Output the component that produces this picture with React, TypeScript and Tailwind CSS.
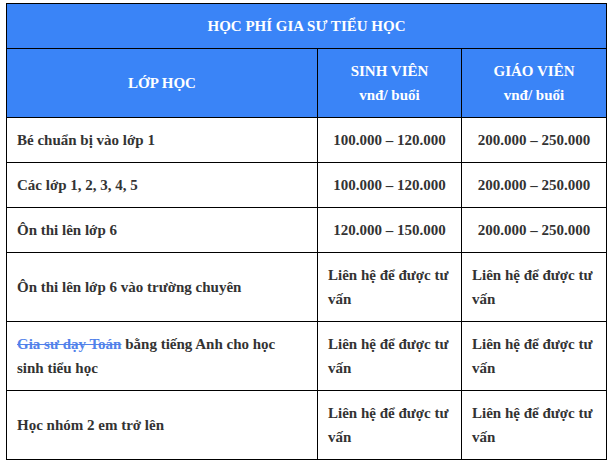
const rows: { name: React.ReactNode; sv: string; gv: string; center: boolean }[] = [
  { name: 'Bé chuẩn bị vào lớp 1', sv: '100.000 – 120.000', gv: '200.000 – 250.000', center: true },
  { name: 'Các lớp 1, 2, 3, 4, 5', sv: '100.000 – 120.000', gv: '200.000 – 250.000', center: true },
  { name: 'Ôn thi lên lớp 6', sv: '120.000 – 150.000', gv: '200.000 – 250.000', center: true },
  { name: 'Ôn thi lên lớp 6 vào trường chuyên', sv: 'Liên hệ để được tư vấn', gv: 'Liên hệ để được tư vấn', center: false },
  {
    name: (
      <>
        <a href="#" className="text-[#5282ea] line-through">Gia sư dạy Toán</a> bằng tiếng Anh cho học sinh tiểu học
      </>
    ),
    sv: 'Liên hệ để được tư vấn',
    gv: 'Liên hệ để được tư vấn',
    center: false,
  },
  { name: 'Học nhóm 2 em trở lên', sv: 'Liên hệ để được tư vấn', gv: 'Liên hệ để được tư vấn', center: false },
];

export default function App() {
  return (
    <div className="min-h-screen bg-white pt-[3px] pl-[6px] font-['Liberation_Serif',serif] text-[15px] font-bold leading-[24px] text-[#333]">
      <table className="w-[600px] table-fixed border-collapse border border-black">
        <colgroup>
          <col className="w-[311px]" />
          <col className="w-[144px]" />
          <col className="w-[145px]" />
        </colgroup>
        <thead>
          <tr className="bg-[#3a84f7] text-white">
            <th colSpan={3} className="border border-black px-[10px] py-[10px] text-center font-bold">
              HỌC PHÍ GIA SƯ TIỂU HỌC
            </th>
          </tr>
          <tr className="bg-[#3a84f7] text-white">
            <th className="border border-black px-[10px] py-[10px] text-center font-bold">LỚP HỌC</th>
            <th className="border border-black px-[10px] py-[10px] text-center font-bold">
              SINH VIÊN
              <br />
              vnđ/ buổi
            </th>
            <th className="border border-black px-[10px] py-[10px] text-center font-bold">
              GIÁO VIÊN
              <br />
              vnđ/ buổi
            </th>
          </tr>
        </thead>
        <tbody>
          {rows.map((r, i) => (
            <tr key={i}>
              <td className="border border-black py-[10px] pl-[10px] pr-[24px] text-left">{r.name}</td>
              <td className={`border border-black px-[10px] py-[10px] ${r.center ? 'text-center' : 'text-left'}`}>{r.sv}</td>
              <td className={`border border-black px-[10px] py-[10px] ${r.center ? 'text-center' : 'text-left'}`}>{r.gv}</td>
            </tr>
          ))}
        </tbody>
      </table>
    </div>
  );
}
